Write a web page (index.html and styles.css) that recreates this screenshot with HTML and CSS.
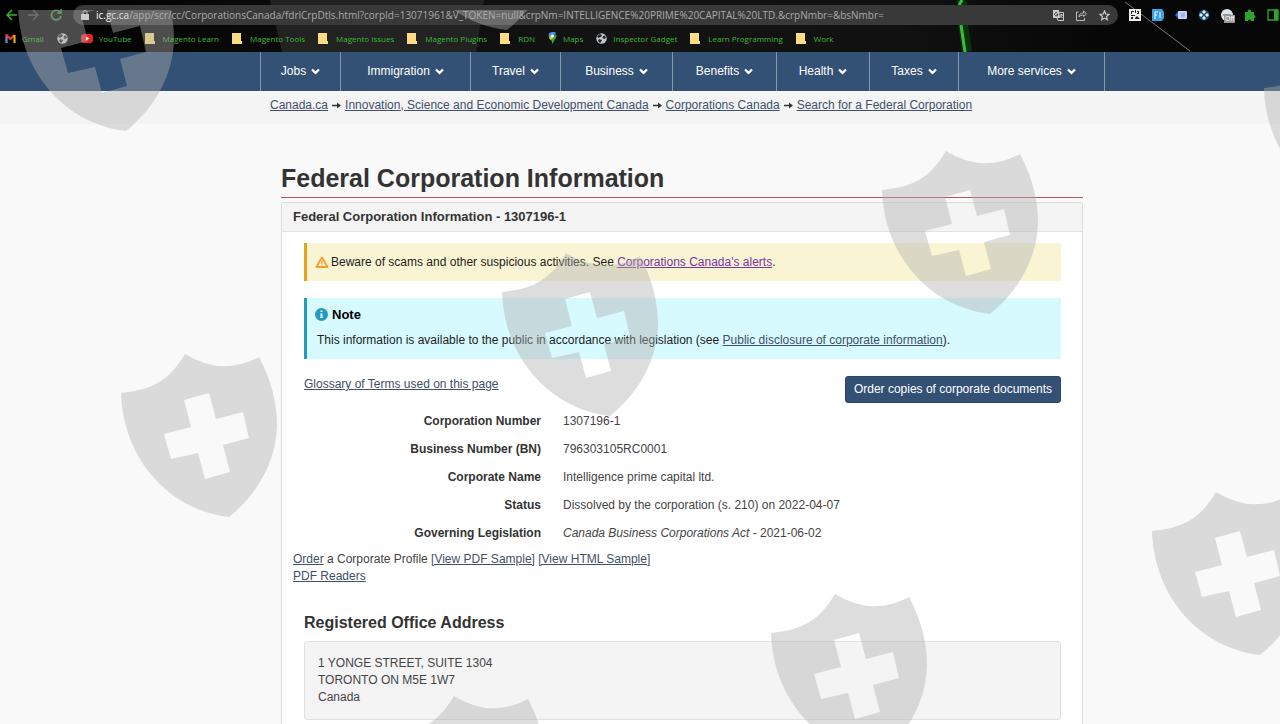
FILE: index.html
```
<!DOCTYPE html>
<html lang="en">
<head>
    <meta charset="UTF-8">
    <meta name="viewport" content="width=device-width, initial-scale=1.0">
    <title>Federal Corporation Information - 1307196-1</title>
    <link rel="stylesheet" href="styles.css">
</head>
<body>
    <svg class="defs" width="0" height="0">
        <symbol id="folder" viewBox="0 0 12 11"><path fill="#fbdc83" d="M0 0h9v8h1v3H0z"/></symbol>
        <symbol id="globe" viewBox="0 0 11 11">
            <circle cx="5.500" cy="5.500" r="5.200" fill="#c4c7ca"/>
            <path fill="#24282b" d="M2 2l2-1 2 1-1 2H4L3 5 1 4zM7 3l2-.5L10 5 8 6 6.500 5zM3 6l3 1-1 2-1 1-2-2z"/>
        </symbol>
        <symbol id="chevron" viewBox="0 0 9 7"><path fill="none" stroke="#fff" stroke-width="2.400" d="M1 1.500l3.500 3.300L8 1.500"/></symbol>
        <symbol id="arrow" viewBox="0 0 9 7"><path fill="#333" d="M0 2.700h5V.5l4 3-4 3V4.300H0z"/></symbol>
    </svg>

    <header class="browser">
        <svg class="browser-theme" width="1280" height="52">
            <path fill="#222" d="M282 52L270 0H484L476 52z"/>
            <path fill="none" stroke="#070" stroke-width="10" opacity=".35" d="M964 0l-4 5M963 25l4 27"/>
            <path fill="none" stroke="#3fb83f" stroke-width="3" d="M962 0l-3 5M961 25l4 27"/>
            <path fill="none" stroke="#777" d="M1125 2l65 49"/>
        </svg>
        <div class="toolbar">
            <button class="tool" aria-label="Back"><svg width="11" height="12"><path fill="none" stroke="#35b52c" stroke-width="1.500" d="M11 6H1.500M6 1L1 6l5 5"/></svg></button>
            <button class="tool" aria-label="Forward"><svg width="11" height="12"><path fill="none" stroke="#444" stroke-width="1.300" d="M0 6h9.500M5 1l5 5-5 5"/></svg></button>
            <button class="tool" aria-label="Reload"><svg width="12" height="12"><path fill="none" stroke="#3f8a3a" stroke-width="1.600" d="M10 3A4.800 4.800 0 1 0 11 7M11 0v4H7"/></svg></button>
            <div class="address">
                <svg width="8" height="10"><path fill="#ccc" d="M0 4h8v6H0z"/><path fill="none" stroke="#ccc" d="M2 4V2.500a2 2 0 0 1 4 0V4"/></svg>
                <label class="host" for="url">ic.gc.ca</label>
                <input class="url" id="url" type="text" value="/app/scr/cc/CorporationsCanada/fdrlCrpDtls.html?corpId=13071961&amp;V_TOKEN=null&amp;crpNm=INTELLIGENCE%20PRIME%20CAPITAL%20LTD.&amp;crpNmbr=&amp;bsNmbr=">
                <button class="tool" aria-label="Translate"><svg width="11" height="11"><path fill="#ccc" d="M0 0h6l1 8H0z"/><path fill="none" stroke="#ccc" d="M6 2.500h4.500v8H5L4 8M7 5h3M8.500 4c0 2-1 3-2 4M7.500 6l2 2"/><path fill="none" stroke="#444" d="M4.500 3A1.700 1.700 0 1 0 5 4.500H3.500"/></svg></button>
                <button class="tool" aria-label="Share"><svg width="11" height="11"><path fill="none" stroke="#bbb" d="M2.500 2H.5v8.500h8V8M3 7c0-3 2-4 4.500-4V.8L10.500 4 7.500 6.500V5C5.500 5 4 5.500 3 7z"/></svg></button>
                <button class="tool" aria-label="Bookmark"><svg width="11" height="11"><path fill="none" stroke="#ccc" stroke-width="1.200" d="M5.500 1l1.300 3 3.200.3-2.400 2.200.7 3.300-2.800-1.700-2.800 1.700.7-3.300L1 4.300 4.200 4z"/></svg></button>
            </div>
            <div class="extensions">
                <button class="tool" aria-label="QR code"><svg width="12" height="12"><path fill="#eee" d="M0 0h12v12H0z"/><path fill="#222" d="M2 2h3v1H3v2H2zM6 1h1v3H6zM8 2h2v3H8V4h1V3H8zM2 6h4v1H2zM2 8h2v2H2zM6 9l2-2 3 3H6z"/></svg></button>
                <button class="tool" aria-label="Font finder"><svg width="12" height="12"><path fill="#3c9fe8" d="M0 0h10l2 3v6l-2 3H0z"/><path fill="none" stroke="#fff" d="M3 10V3h3M3 6h2M8 3v6"/></svg></button>
                <button class="tool" aria-label="Tag helper"><svg width="12" height="12"><path fill="#2e6ce8" d="M0 6l4-4v8z"/><rect x="3" y="2" width="9" height="8" rx="1" fill="#c3d2fb"/><path stroke="#7b93d6" d="M6 5h4M6 7h4"/></svg></button>
                <button class="tool" aria-label="Vault"><svg width="12" height="12"><circle cx="6" cy="6" r="5.500" fill="#1e4a6d"/><path fill="#e5f2fb" d="M6 1l2 2-2 2-2-2zM6 7l2 2-2 2-2-2zM1 6l2-2 2 2-2 2zM7 6l2-2 2 2-2 2z"/></svg></button>
                <button class="tool extension-off" aria-label="Blocker"><svg width="12" height="12"><circle cx="6" cy="6" r="6" fill="#dce6ee"/><path fill="#8799a6" d="M2 5h8v2H2z"/></svg><span class="off">Off</span></button>
                <button class="tool" aria-label="Extensions"><svg width="12" height="12"><path fill="#2fa32b" d="M1 3h3a1.700 1.700 0 1 1 3 0h3v3a1.500 1.500 0 1 1 0 3v3H7a1.500 1.500 0 0 0-3 0H1V8a1.500 1.500 0 0 0 0-2z"/></svg></button>
                <button class="tool" aria-label="Side panel"><svg width="12" height="12"><path fill="none" stroke="#2fa32b" stroke-width="1.300" d="M1 1h10v10H1z"/><path fill="#2fa32b" d="M7 1h4v10H7z"/></svg></button>
            </div>
        </div>
        <nav class="bookmarks" aria-label="Bookmarks">
            <a href="#"><svg width="11" height="9"><path fill="none" stroke="#e94335" stroke-width="2" d="M1.500 9V1l4 4 4-4"/><path stroke="#4285f4" stroke-width="2" d="M1.500 3v6"/><path stroke="#fbbc04" stroke-width="2" d="M9.500 1v8"/></svg>Gmail</a>
            <a href="#" aria-label="Web"><svg width="11" height="11"><use href="#globe"/></svg></a>
            <a href="#"><svg width="12" height="9"><rect width="12" height="9" rx="3" fill="#e8222a"/><path fill="#fff" d="M5 2.500l3.500 2L5 6.500z"/></svg>YouTube</a>
            <a href="#"><svg width="12" height="11"><use href="#folder"/></svg>Magento Learn</a>
            <a href="#"><svg width="12" height="11"><use href="#folder"/></svg>Magento Tools</a>
            <a href="#"><svg width="12" height="11"><use href="#folder"/></svg>Magento Issues</a>
            <a href="#"><svg width="12" height="11"><use href="#folder"/></svg>Magento Plugins</a>
            <a href="#"><svg width="12" height="11"><use href="#folder"/></svg>RDN</a>
            <a href="#"><svg width="9" height="12"><path fill="#4a90e8" d="M4.500 0A4 4 0 0 0 .5 4l1.500 3 6-6A4 4 0 0 0 4.500 0z"/><path fill="#34a853" d="M8 2c1 2 0 4-1.500 6L4.500 12C4 9 3 8 2 7z"/><path fill="#fbbc04" d="M1 5.500L4 3l1 3-2.500 2z"/><circle cx="4.500" cy="4" r="1.500" fill="#fff"/></svg>Maps</a>
            <a href="#"><svg width="11" height="11"><use href="#globe"/></svg>Inspector Gadget</a>
            <a href="#"><svg width="12" height="11"><use href="#folder"/></svg>Learn Programming</a>
            <a href="#"><svg width="12" height="11"><use href="#folder"/></svg>Work</a>
        </nav>
    </header>

    <nav class="menu" aria-label="Main">
        <ul>
            <li><a href="#">Jobs <svg width="9" height="7"><use href="#chevron"/></svg></a></li>
            <li><a href="#">Immigration <svg width="9" height="7"><use href="#chevron"/></svg></a></li>
            <li><a href="#">Travel <svg width="9" height="7"><use href="#chevron"/></svg></a></li>
            <li><a href="#">Business <svg width="9" height="7"><use href="#chevron"/></svg></a></li>
            <li><a href="#">Benefits <svg width="9" height="7"><use href="#chevron"/></svg></a></li>
            <li><a href="#">Health <svg width="9" height="7"><use href="#chevron"/></svg></a></li>
            <li><a href="#">Taxes <svg width="9" height="7"><use href="#chevron"/></svg></a></li>
            <li><a href="#">More services <svg width="9" height="7"><use href="#chevron"/></svg></a></li>
        </ul>
    </nav>

    <nav class="breadcrumb" aria-label="Breadcrumb">
        <a href="#">Canada.ca</a>
        <svg width="9" height="7"><use href="#arrow"/></svg>
        <a href="#">Innovation, Science and Economic Development Canada</a>
        <svg width="9" height="7"><use href="#arrow"/></svg>
        <a href="#">Corporations Canada</a>
        <svg width="9" height="7"><use href="#arrow"/></svg>
        <a href="#">Search for a Federal Corporation</a>
    </nav>

    <main class="container">
        <h1>Federal Corporation Information</h1>
        <section class="panel">
            <h2 class="panel-title">Federal Corporation Information - 1307196-1</h2>
            <div class="panel-body">
                <div class="alert alert-warning">
                    <svg width="14" height="12"><path fill="#f0a030" stroke="#f0a030" stroke-linejoin="round" stroke-width="2" d="M7 1.500L1.500 11h11z"/><path fill="#f9f4d4" d="M7 3l3.800 7H3.200z"/><path fill="#f0a030" d="M6.300 4.500h1.400V8H6.300zM6.300 8.500h1.400v1H6.300z"/></svg>
                    <p>Beware of scams and other suspicious activities. See <a class="visited" href="#">Corporations Canada's alerts</a>.</p>
                </div>
                <div class="alert alert-info">
                    <h3><svg width="13" height="13"><circle cx="6.500" cy="6.500" r="6.500" fill="#269abc"/><path fill="#d7faff" d="M5.500 2.500h2v1.500h-2zM5 5.500h2.500V9H8v1H5V9h.5V6.500H5z"/></svg>Note</h3>
                    <p>This information is available to the public in accordance with legislation (see <a href="#">Public disclosure of corporate information</a>).</p>
                </div>
                <div class="actions">
                    <a href="#">Glossary of Terms used on this page</a>
                    <button class="btn-primary">Order copies of corporate documents</button>
                </div>
                <dl class="details">
                    <dt>Corporation Number</dt>
                    <dd>1307196-1</dd>
                    <dt>Business Number (BN)</dt>
                    <dd>796303105RC0001</dd>
                    <dt>Corporate Name</dt>
                    <dd>Intelligence prime capital ltd.</dd>
                    <dt>Status</dt>
                    <dd>Dissolved by the corporation (s. 210) on 2022-04-07</dd>
                    <dt>Governing Legislation</dt>
                    <dd><em>Canada Business Corporations Act</em> - 2021-06-02</dd>
                </dl>
                <p class="profile">
                    <a href="#">Order</a> a Corporate Profile <a href="#">[View PDF Sample]</a> <a href="#">[View HTML Sample]</a><br>
                    <a href="#">PDF Readers</a>
                </p>
                <h3 class="section-title">Registered Office Address</h3>
                <address class="well">
                    1 YONGE STREET, SUITE 1304<br>
                    TORONTO ON M5E 1W7<br>
                    Canada
                </address>
            </div>
        </section>
    </main>

    <svg class="watermark" aria-hidden="true">
        <defs>
            <path id="badge" fill-rule="evenodd" d="M64 0Q101 23 138 3C150 26 156 48 156 72C155 106 138 139 108 163C48 156 2 105 0 39C31 36 48 27 64 0ZM63 46L88 39L95 65L122 58L128 84L102 91L109 118L84 125L77 99L50 105L43 80L70 73Z"/>
        </defs>
        <use href="#badge" x="18" y="-42"/>
        <use href="#badge" x="399" y="-143"/>
        <use href="#badge" x="121" y="344"/>
        <use href="#badge" x="502" y="243"/>
        <use href="#badge" x="882" y="141"/>
        <use href="#badge" x="1264" y="39"/>
        <use href="#badge" x="390" y="686"/>
        <use href="#badge" x="771" y="584"/>
        <use href="#badge" x="1152" y="482"/>
    </svg>
</body>
</html>
```

FILE: styles.css
```
* {
    box-sizing: border-box;
}
body {
    display: flex;
    flex-direction: column;
    position: relative;
    height: 100vh;
    margin: 0;
    overflow: hidden;
    background-color: #f9f9f9;
    color: #444;
    font-family: "Liberation Sans", Arial, sans-serif;
    font-size: 12px;
    line-height: 17px;
}
h1, h2, h3, p, dl, dd, ul {
    margin: 0;
    padding: 0;
}
a {
    color: #41506a;
}
svg {
    flex: none;
}
.defs {
    position: absolute;
}

/* browser bar */
.browser {
    position: relative;
    flex: none;
    height: 52px;
    overflow: hidden;
    background: linear-gradient(90deg, #000 0, #090909 250px, #131313 600px, #111 900px, #070707 1100px);
    font-family: "Open Sans", "Noto Sans", sans-serif;
}
.browser-theme {
    position: absolute;
    top: 0;
    left: 0;
}
.toolbar {
    display: flex;
    position: relative;
    align-items: center;
    gap: 11px;
    height: 30px;
    padding: 0 1px 0 6px;
}
.tool {
    display: flex;
    padding: 0;
    border: 0;
    background: none;
}
.address {
    display: flex;
    flex: 1;
    align-items: center;
    height: 20px;
    padding: 0 8px;
    border-radius: 10px;
    background-color: #393939;
    font-size: 10px;
}
.address .tool {
    margin-left: 12px;
}
.host {
    margin-left: 7px;
    color: #fff;
}
.url {
    flex: 1;
    min-width: 0;
    padding: 0;
    border: 0;
    background: none;
    color: #aaa;
    font: inherit;
}
.extensions {
    display: flex;
    gap: 11px;
}
.extension-off {
    position: relative;
}
.off {
    position: absolute;
    top: 6px;
    left: 3px;
    padding: 0 1px;
    background-color: #999;
    color: #fff;
    font-size: 7px;
    line-height: 8px;
}
.bookmarks {
    display: flex;
    position: relative;
    align-items: center;
    gap: 13px;
    height: 16px;
    padding-left: 5px;
}
.bookmarks a {
    display: flex;
    align-items: center;
    gap: 6px;
    color: #3fb834;
    font-size: 8px;
    text-decoration: none;
    white-space: nowrap;
}

/* site menu */
.menu {
    flex: none;
    padding: 0 175px 0 260px;
    background-color: #335075;
}
.menu ul {
    display: grid;
    grid-template-columns: 80fr 130fr 90fr 112fr 104fr 93fr 89fr 146fr;
    border-right: 1px solid #8496ac;
    list-style: none;
}
.menu a {
    display: flex;
    align-items: center;
    justify-content: center;
    gap: 5px;
    height: 39px;
    border-left: 1px solid #8496ac;
    color: #fff;
    text-decoration: none;
}
.breadcrumb {
    display: flex;
    flex: none;
    align-items: center;
    gap: 4px;
    height: 33px;
    padding: 0 175px 5px 270px;
    background-color: #f4f4f4;
}

/* content */
.container {
    display: flex;
    flex: 1;
    flex-direction: column;
    min-height: 0;
    padding: 38px 197px 0 281px;
}
h1 {
    padding-bottom: 3px;
    border-bottom: 1px solid #b05a60;
    color: #333;
    font-size: 25px;
    line-height: 32px;
}
.panel {
    flex: 1;
    margin-top: 4px;
    border: 1px solid #ddd;
    border-bottom: 0;
    border-radius: 3px 3px 0 0;
    background-color: #fff;
}
.panel-title {
    padding: 5px 11px 6px;
    border-bottom: 1px solid #e2e2e2;
    background-color: #f4f4f4;
    color: #333;
    font-size: 13px;
    line-height: 17px;
}
.panel-body {
    padding: 11px 21px 11px 22px;
}
.alert {
    margin-bottom: 17px;
    border-left: 3px solid;
    color: #222;
}
.alert-warning {
    display: flex;
    align-items: center;
    gap: 2px;
    height: 38px;
    padding: 0 8px;
    border-color: #e8a21d;
    background-color: #f9f4d4;
}
.alert-info {
    padding: 8px 8px 10px;
    border-color: #269abc;
    background-color: #d7faff;
}
.alert-info h3 {
    display: flex;
    align-items: center;
    gap: 4px;
    margin-bottom: 9px;
    color: #000;
    font-size: 13px;
}
.alert-info p {
    padding-left: 2px;
}
.visited {
    color: #7834a0;
}
.actions {
    display: flex;
    align-items: flex-start;
    justify-content: space-between;
    margin-bottom: 4px;
}
.btn-primary {
    height: 27px;
    padding: 0 8px;
    border: 1px solid #2a4366;
    border-radius: 3px;
    background-color: #335075;
    color: #fff;
    font: inherit;
}
.details {
    display: grid;
    grid-template-columns: 237px 1fr;
    column-gap: 22px;
    line-height: 28px;
}
.details dt {
    color: #333;
    font-weight: bold;
    text-align: right;
}
.profile {
    margin: 4px 0 0 -11px;
}
.section-title {
    margin: 27px 0 7px;
    color: #333;
    font-size: 16px;
    line-height: 22px;
}
.well {
    padding: 13px;
    border: 1px solid #e0e0e0;
    border-radius: 3px;
    background-color: #f4f4f4;
    font-style: normal;
}

.watermark {
    position: absolute;
    top: 10px;
    left: 0;
    width: 100%;
    height: calc(100% - 10px);
    fill: #b0b0b0;
    opacity: .42;
    pointer-events: none;
}
```
